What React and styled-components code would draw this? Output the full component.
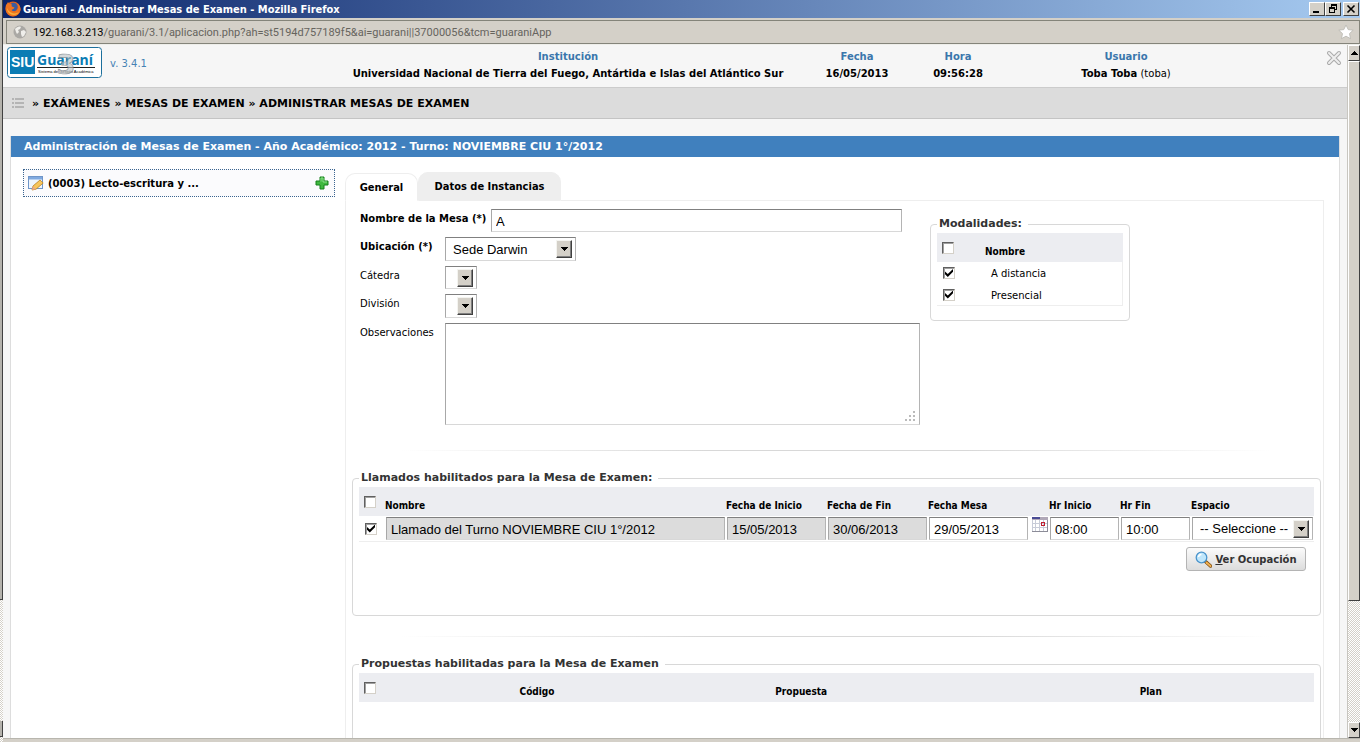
import styled, { createGlobalStyle } from "styled-components";
import { useState } from "react";

const GlobalStyle = createGlobalStyle`
  * {
    box-sizing: border-box;
  }
  body {
    margin: 0;
    font-family: "DejaVu Sans", Verdana, sans-serif;
    font-size: 10px;
    color: #000;
    background: #d4d0c8;
  }
`;

const Window = styled.div`
  height: 100vh;
  display: flex;
  overflow: hidden;
`;

const WindowColumn = styled.div`
  flex: 1;
  min-width: 0;
  display: flex;
  flex-direction: column;
`;

const LeftEdge = styled.div`
  width: 3px;
  display: flex;
  flex-direction: column;
`;

const EdgePiece = styled.div`
  flex: ${(props) => props.$grow || 0} 0 ${(props) => props.$size || 0}px;
  background: ${(props) => (props.$hatch ? "repeating-conic-gradient(#fff 0 25%, #d4d0c8 0 50%) 0 0 / 2px 2px" : "#b4b2ac")};
  border-right: ${(props) => (props.$hatch ? "0" : "1px solid #404040")};
  border-bottom: ${(props) => (props.$hatch ? "0" : "1px solid #404040")};
`;

const TitleBar = styled.div`
  height: 18px;
  display: flex;
  align-items: center;
  gap: 2px;
  padding: 0 1px 0 2px;
  background: linear-gradient(to right, #0a246a, #a6caf0);
`;

const WindowTitle = styled.h1`
  flex: 1;
  margin: 0;
  font-family: "DejaVu Sans Condensed", "DejaVu Sans", Tahoma, sans-serif;
  font-stretch: condensed;
  font-size: 11px;
  font-weight: bold;
  color: #fff;
`;

const WindowButton = styled.button`
  width: 16px;
  height: 14px;
  padding: 0;
  display: flex;
  align-items: center;
  justify-content: center;
  background: #d4d0c8;
  border: 1px solid;
  border-color: #fff #404040 #404040 #fff;
  margin-left: ${(props) => (props.$apart ? "2px" : "0")};
`;

const WindowButtons = styled.div`
  display: flex;
`;

const AddressArea = styled.div`
  height: 27px;
  padding: 2px 0 1px 3px;
  background: #d4d0c8;
  border-bottom: 1px solid #eeeeea;
`;

const AddressBar = styled.div`
  height: 24px;
  display: flex;
  align-items: center;
  gap: 6px;
  padding: 0 5px 0 6px;
  border: 1px solid #84847a;
  font-family: Roboto, Tahoma, sans-serif;
  font-size: 11px;
  color: #66645e;
`;

const Address = styled.div`
  flex: 1;
`;

const Host = styled.span`
  color: #000;
`;

const Viewport = styled.div`
  flex: 1;
  min-height: 0;
  display: flex;
`;

const Page = styled.div`
  flex: 1;
  min-width: 0;
  overflow: hidden;
  background: #f6f6f6;
`;

const StatusStrip = styled.div`
  height: 4px;
  background: #d4d0c8;
  border-top: 1px solid #b8b6ae;
`;

const ScrollBar = styled.div`
  width: 13px;
  display: flex;
  flex-direction: column;
  border-left: 1px solid #c8c6c0;
`;

const ScrollButton = styled.button`
  height: 16px;
  padding: 0;
  display: flex;
  align-items: center;
  justify-content: center;
  background: #d4d0c8;
  border: 1px solid;
  border-color: #fff #404040 #404040 #fff;
`;

const ScrollThumb = styled.div`
  flex: 540;
  background: #d4d0c8;
  border: 1px solid;
  border-color: #fff #404040 #404040 #fff;
`;

const ScrollTrack = styled.div`
  flex: 122;
  background: repeating-conic-gradient(#fff 0 25%, #d4d0c8 0 50%) 0 0 / 2px 2px;
`;

const Header = styled.header`
  height: 43px;
  display: grid;
  grid-template-columns: 345fr 440fr 138fr 64fr 272fr 85fr;
  border-bottom: 1px solid #ccc;
`;

const Brand = styled.div`
  display: flex;
  align-items: flex-start;
  gap: 8px;
  padding: 2px 0 0 4px;
`;

const Version = styled.span`
  line-height: 34px;
  color: #4682b4;
`;

const HeaderCell = styled.div`
  padding-top: 3px;
  text-align: center;
  line-height: 17px;
  white-space: nowrap;
`;

const HeaderLabel = styled.div`
  font-weight: bold;
  color: #3a76ac;
`;

const CloseCell = styled.div`
  display: flex;
  justify-content: flex-end;
  align-items: flex-start;
  padding: 5px 5px 0 0;
`;

const IconButton = styled.button`
  padding: 0;
  margin: 0 0 0 ${(props) => (props.$end ? "auto" : "0")};
  border: 0;
  background: none;
  display: flex;
`;

const Breadcrumb = styled.nav`
  height: 31px;
  display: flex;
  align-items: center;
  gap: 8px;
  padding-left: 9px;
  background: #dcdcdc;
  border-bottom: 1px solid #c4c4c4;
  font-size: 11px;
  font-weight: bold;
`;

const Panel = styled.section`
  margin: 17px 7px 0;
  min-height: 100%;
  background: #fff;
  border: solid #ddd;
  border-width: 0 1px;
`;

const PanelTitle = styled.h2`
  height: 21px;
  margin: 0;
  padding-left: 13px;
  line-height: 21px;
  font-size: 11px;
  color: #fff;
  background: #4080be;
`;

const PanelBody = styled.div`
  display: flex;
  align-items: stretch;
  padding: 12px 15px 0 12px;
`;

const Sidebar = styled.aside`
  flex: 0 0 312px;
  margin-right: 10px;
`;

const TreeItem = styled.div`
  height: 28px;
  display: flex;
  align-items: center;
  gap: 4px;
  padding: 0 5px 0 4px;
  border: 1px dotted #3b6590;
  background: #fbfbfd;
  font-weight: bold;
`;

const TreeLabel = styled.span`
  flex: 1;
`;

const Main = styled.main`
  flex: 1;
  min-width: 0;
`;

const Tabs = styled.div`
  height: 32px;
  display: flex;
  align-items: flex-end;

  &::after {
    content: "";
    flex: 1;
    border-bottom: 1px solid #eee;
  }
`;

const Tab = styled.button`
  height: ${(props) => (props.$active ? "28px" : "29px")};
  width: ${(props) => (props.$active ? "73px" : "143px")};
  padding: 0;
  border: 1px solid #eee;
  border-bottom-color: ${(props) => (props.$active ? "#fff" : "#eee")};
  border-radius: 10px 10px 0 0;
  background: ${(props) => (props.$active ? "#fff" : "#eee")};
  font-family: "DejaVu Sans Condensed", "DejaVu Sans", Tahoma, sans-serif;
  font-stretch: condensed;
  font-size: 11px;
  font-weight: bold;
  color: #000;
`;

const TabBody = styled.div`
  padding: 8px 2px 20px 6px;
  border: solid #eee;
  border-width: 0 1px;
`;

const FormArea = styled.div`
  display: flex;
  align-items: flex-start;
  gap: 10px;
  padding-left: 8px;
`;

const Fields = styled.div`
  flex: 0 0 560px;
  display: flex;
  flex-direction: column;
  gap: 5px;
`;

const Field = styled.div`
  display: flex;
  align-items: flex-start;
`;

const Label = styled.label`
  flex: 0 0 ${(props) => (props.$wide ? 131 : 85)}px;
  line-height: 19px;
  font-weight: ${(props) => (props.$required ? "bold" : "normal")};
  white-space: nowrap;
`;

const TextInput = styled.input`
  width: ${(props) => (props.$width ? props.$width + "px" : "100%")};
  height: 23px;
  display: block;
  padding: 1px 4px 0;
  border: 1px solid;
  border-color: #808080 #b4b4b4 #d8d8d8 #a8a8a8;
  border-radius: 0;
  outline: 0;
  background: ${(props) => (props.readOnly ? "#dcdcdc" : "#fff")};
  font-family: "Liberation Sans", Arial, sans-serif;
  font-size: 13px;
  color: #000;
`;

const SelectBox = styled.div`
  width: ${(props) => (props.$width ? props.$width + "px" : "100%")};
  height: ${(props) => (props.$tall ? "24px" : "23px")};
  display: grid;
  align-items: center;

  > * {
    grid-area: 1 / 1;
  }
`;

const NativeSelect = styled.select`
  appearance: none;
  width: 100%;
  height: 100%;
  padding: 0 20px 0 7px;
  border: 1px solid;
  border-color: #808080 #b4b4b4 #d8d8d8 #a8a8a8;
  border-radius: 0;
  background: #fff;
  font-family: "Liberation Sans", Arial, sans-serif;
  font-size: 13px;
  color: #000;
`;

const SelectArrow = styled.span`
  justify-self: end;
  width: 16px;
  height: 18px;
  margin-right: 4px;
  display: flex;
  align-items: center;
  justify-content: center;
  pointer-events: none;
  background: #d4d0c8;
  border: 1px solid;
  border-color: #f4f4f0 #404040 #404040 #f4f4f0;
  box-shadow: inset -1px -1px 0 #808080;
`;

const NotesBox = styled.div`
  width: 475px;
  display: grid;

  > * {
    grid-area: 1 / 1;
  }
`;

const Notes = styled.textarea`
  height: 102px;
  resize: none;
  border: 1px solid;
  border-color: #808080 #b4b4b4 #d8d8d8 #a8a8a8;
  border-radius: 0;
  font-family: "Liberation Sans", Arial, sans-serif;
  font-size: 13px;
`;

const Grip = styled.svg`
  place-self: end;
  margin: 0 4px 3px 0;
`;

const Fieldset = styled.fieldset`
  min-width: 0;
  width: ${(props) => (props.$width ? props.$width + "px" : "auto")};
  margin: ${(props) => (props.$width ? "8px 0 0" : "0")};
  padding: 2px 6px ${(props) => props.$bottom}px;
  border: 1px solid #d8d8d8;
  border-radius: 4px;
`;

const Legend = styled.legend`
  height: 14px;
  padding: 0 6px 0 2px;
  line-height: 14px;
  font-size: 11px;
  font-weight: bold;
  color: #333;
`;

const Divider = styled.hr`
  height: 1px;
  margin: ${(props) => (props.$first ? "25px" : "20px")} 50px 20px;
  border: 0;
  background: linear-gradient(to right, #fff, #d8d8d8 35%, #d8d8d8 65%, #fff);
`;

const Table = styled.table`
  width: 100%;
  table-layout: fixed;
  border-collapse: separate;
  border-spacing: 0;
`;

const Th = styled.th`
  height: 29px;
  padding: ${(props) => (props.$check ? "0 0 0 5px" : "8px 0 0")};
  text-align: ${(props) => props.$align || "left"};
  background: #ecedf1;
  font-family: "DejaVu Sans Condensed", "DejaVu Sans", Tahoma, sans-serif;
  font-stretch: condensed;
  font-size: 10px;
  white-space: nowrap;
`;

const Td = styled.td`
  height: 26px;
  padding: ${(props) => (props.$check ? "0 0 0 6px" : "1px")};
  vertical-align: ${(props) => (props.$top ? "top" : "middle")};
  border-bottom: 1px solid #eee;
`;

const ListTd = styled.td`
  height: 22px;
  padding: ${(props) => (props.$check ? "0 0 0 6px" : "1px 0 0 6px")};
  border-bottom: ${(props) => (props.$last ? "1px solid #eee" : "0")};

  &:last-child {
    border-right: 1px solid #eee;
  }
`;

const Check = styled.input`
  appearance: none;
  width: 12px;
  height: 12px;
  margin: 0;
  display: grid;
  place-items: center;
  background: #fff;
  border: 1px solid;
  border-color: #606060 #d4d0c8 #d4d0c8 #606060;
  box-shadow: inset 1px 1px 0 #a0a0a0;

  &:checked::after {
    content: "";
    width: 8px;
    height: 8px;
    background: #000;
    clip-path: polygon(0 30%, 35% 62%, 100% 0, 100% 35%, 35% 100%, 0 65%);
  }
`;

const ActionRow = styled.div`
  display: flex;
  justify-content: flex-end;
  padding: 5px 8px 0 0;
`;

const ActionButton = styled.button`
  width: 120px;
  height: 24px;
  padding: 0;
  display: flex;
  align-items: center;
  justify-content: center;
  gap: 3px;
  border: 1px solid #b4b4b4;
  border-radius: 3px;
  background: linear-gradient(#fbfbfb, #dcdcdc);
  font-family: "DejaVu Sans", Verdana, sans-serif;
  font-size: 10px;
  font-weight: bold;
  color: #333;
  white-space: nowrap;
`;

const FirefoxIcon = () => (
  <svg width="16" height="16" viewBox="0 0 16 16">
    <circle cx="8" cy="8" r="7.5" fill="#e0601a" />
    <circle cx="8.500" cy="6" r="4.200" fill="#3a5ca0" />
    <path d="M1 4c1-1 1.500-2 2-3 1 1.500 2 2 4 2.500C6 5 7 6 9.500 6.500 9 8 7.500 8 6.500 9c1.500 2 4.500 2 6-.5 1-2 .8-4-.5-6C15 4 16 7 15.300 10 14 14 10 16 6 15 1.500 13.500-.5 9 1 4z" fill="#ee7420" />
    <path d="M2 7c0 4 3 7 7 7 2 0 4-1 5-3-2 1.500-5 2-8 .5C4 10.500 3 9 2 7z" fill="#f8b03a" />
  </svg>
);

const GlobeIcon = () => (
  <svg width="14" height="14" viewBox="0 0 14 14">
    <circle cx="7" cy="7" r="6.500" fill="#aaa8a4" />
    <path d="M2 4c2-2 4-3 6-2L7 4 5 5l1 2-2 2-1-2zM8 6l3-1 2 2-2 4-2 1-1-3z" fill="#efeeea" />
  </svg>
);

const Triangle = ({ up, size = 8 }) => (
  <svg width={size} height={size / 2} viewBox="0 0 8 4" shapeRendering="crispEdges">
    <path d={up ? "M0 4L4 0L8 4z" : "M0 0L4 4L8 0z"} fill="#000" />
  </svg>
);

const Logo = () => (
  <svg width="95" height="31" viewBox="0 0 95 31" overflow="visible" role="img" aria-label="SIU Guaraní 3">
    <rect x=".5" y=".5" width="94" height="30" rx="3" fill="#fff" stroke="#1c6f9c" />
    <rect x="3" y="3" width="25" height="24" fill="#0a7cb4" />
    <text x="4" y="20" fontFamily="Liberation Sans" fontSize="14" fontWeight="bold" fill="#fff">SIU</text>
    <text x="30" y="18" fontFamily="Open Sans" fontSize="14" fontWeight="bold" fill="#0a7cb4">Guaraní</text>
    <path d="M30 20.500h58" stroke="#222" />
    <text x="31" y="26" fontFamily="Liberation Sans" fontSize="4" fill="#000">Sistema de Gestión Académica</text>
    <text x="59" y="27" fontFamily="DejaVu Sans" fontSize="27" fontWeight="bold" fill="#b9bfc3" fillOpacity=".6" stroke="#7c8488" strokeOpacity=".8" strokeWidth=".7" textAnchor="middle">3</text>
  </svg>
);

const EditIcon = () => (
  <svg width="16" height="16" viewBox="0 0 16 16">
    <rect x=".5" y="1.500" width="14" height="12" fill="#eef5fd" stroke="#6f95c8" />
    <path d="M1 2h13v2.500H1z" fill="#7fa9e0" />
    <path d="M4 15l1-4 7-6 3.200 3L8 14.200z" fill="#f7c65c" stroke="#b98022" strokeWidth=".8" />
    <path d="M4 15l1-4 3 3.200z" fill="#eaa98c" />
  </svg>
);

const PlusIcon = () => (
  <svg width="14" height="14" viewBox="0 0 14 14">
    <path d="M5 1h4v4h4v4H9v4H5V9H1V5h4z" fill="#3fb83f" stroke="#16801c" />
    <path d="M6 5.500V2h2v4h4" fill="none" stroke="#8be08b" />
  </svg>
);

const CalendarIcon = () => (
  <svg width="16" height="15" viewBox="0 0 16 15" shapeRendering="crispEdges">
    <rect width="16" height="15" fill="#fff" />
    <path d="M0 6.500h16M0 10.500h16M3.500 3v12M7.500 3v12M11.500 3v12M.5 0v15" stroke="#c8ccd8" />
    <path d="M15.500 0v15M0 14.500h16" stroke="#8c8c98" />
    <path d="M0 0h16v3H0z" fill="#b0a8b8" />
    <path d="M0 0h8v2H0z" fill="#4a4c94" />
    <path d="M9 5h4v4H9zM10 6v2h2V6z" fillRule="evenodd" fill="#c02030" />
  </svg>
);

const SearchIcon = () => (
  <svg width="17" height="17" viewBox="0 0 17 17">
    <path d="M10.500 10.500l5 4.500" stroke="#7a4a10" strokeWidth="3.500" strokeLinecap="round" />
    <path d="M11.500 11.500l4 3.500" stroke="#f0b050" strokeWidth="2" strokeLinecap="round" />
    <circle cx="6.500" cy="6.500" r="5.300" fill="#bfe6fb" stroke="#4a94cc" strokeWidth="1.300" />
    <path d="M3.500 6a3 3 0 0 1 3-2.500" stroke="#fff" strokeWidth="1.500" fill="none" />
  </svg>
);

const Select = ({ id, label, width, tall, option }) => (
  <SelectBox $width={width} $tall={tall}>
    <NativeSelect id={id} aria-label={label}>
      <option>{option}</option>
    </NativeSelect>
    <SelectArrow>
      <Triangle />
    </SelectArrow>
  </SelectBox>
);

const headerData = [
  { label: "Institución", value: "Universidad Nacional de Tierra del Fuego, Antártida e Islas del Atlántico Sur" },
  { label: "Fecha", value: "16/05/2013" },
  { label: "Hora", value: "09:56:28" },
];

const App = () => {
  const [nombre, setNombre] = useState("A");
  const [fechaMesa, setFechaMesa] = useState("29/05/2013");
  const [inicio, setInicio] = useState("08:00");
  const [fin, setFin] = useState("10:00");

  return (
    <Window>
      <GlobalStyle />
      <LeftEdge>
        <EdgePiece $grow={600} />
        <EdgePiece $grow={121} $hatch />
        <EdgePiece $size={16} />
        <EdgePiece $size={5} $hatch />
      </LeftEdge>
      <WindowColumn>
        <TitleBar>
          <FirefoxIcon />
          <WindowTitle>Guarani - Administrar Mesas de Examen - Mozilla Firefox</WindowTitle>
          <WindowButtons>
            <WindowButton aria-label="Minimizar">
              <svg width="10" height="10" shapeRendering="crispEdges"><path d="M1 7h6v2H1z" /></svg>
            </WindowButton>
            <WindowButton aria-label="Restaurar">
              <svg width="10" height="10" shapeRendering="crispEdges">
                <path d="M3 0h6v6H7V5h1V2H4v1H3zM1 3h6v6H1zM2 5v3h4V5z" fillRule="evenodd" />
              </svg>
            </WindowButton>
            <WindowButton aria-label="Cerrar" $apart>
              <svg width="10" height="10"><path d="M1.500 1.500l7 7m0-7l-7 7" stroke="#000" strokeWidth="1.600" /></svg>
            </WindowButton>
          </WindowButtons>
        </TitleBar>
        <AddressArea>
          <AddressBar>
            <GlobeIcon />
            <Address>
              <Host>192.168.3.213</Host>/guarani/3.1/aplicacion.php?ah=st5194d757189f5&amp;ai=guarani||37000056&amp;tcm=guaraniApp
            </Address>
            <svg width="16" height="16" viewBox="0 0 16 16">
              <path d="M8 1l2.200 4.600 5 .6-3.700 3.400 1 5L8 12.200l-4.500 2.400 1-5L.8 6.200l5-.6z" fill="#fff" stroke="#b8b6b0" strokeWidth=".8" />
            </svg>
          </AddressBar>
        </AddressArea>
        <Viewport>
          <Page>
            <Header>
              <Brand>
                <Logo />
                <Version>v. 3.4.1</Version>
              </Brand>
              {headerData.map((item) => (
                <HeaderCell key={item.label}>
                  <HeaderLabel>{item.label}</HeaderLabel>
                  <b>{item.value}</b>
                </HeaderCell>
              ))}
              <HeaderCell>
                <HeaderLabel>Usuario</HeaderLabel>
                <b>Toba Toba</b> (toba)
              </HeaderCell>
              <CloseCell>
                <IconButton aria-label="Salir">
                  <svg width="16" height="16" viewBox="0 0 16 16">
                    <path d="M3 3l10 10M13 3L3 13" stroke="#aaa" strokeWidth="4" strokeLinecap="round" />
                    <path d="M3 3l10 10M13 3L3 13" stroke="#eee" strokeWidth="2" strokeLinecap="round" />
                  </svg>
                </IconButton>
              </CloseCell>
            </Header>
            <Breadcrumb>
              <svg width="12" height="10" shapeRendering="crispEdges">
                <path d="M0 1h2M3 1h9M0 5h2M3 5h9M0 9h2M3 9h9" stroke="#b4b4b4" strokeWidth="2" />
              </svg>
              <span>» EXÁMENES » MESAS DE EXAMEN » ADMINISTRAR MESAS DE EXAMEN</span>
            </Breadcrumb>
            <Panel>
              <PanelTitle>Administración de Mesas de Examen - Año Académico: 2012 - Turno: NOVIEMBRE CIU 1°/2012</PanelTitle>
              <PanelBody>
                <Sidebar>
                  <TreeItem>
                    <EditIcon />
                    <TreeLabel>(0003) Lecto-escritura y ...</TreeLabel>
                    <IconButton aria-label="Agregar">
                      <PlusIcon />
                    </IconButton>
                  </TreeItem>
                </Sidebar>
                <Main>
                  <Tabs>
                    <Tab $active>General</Tab>
                    <Tab>Datos de Instancias</Tab>
                  </Tabs>
                  <TabBody>
                    <FormArea>
                      <Fields>
                        <Field>
                          <Label htmlFor="nombre" $required $wide>Nombre de la Mesa (*)</Label>
                          <TextInput id="nombre" $width={411} value={nombre} onChange={(e) => setNombre(e.target.value)} />
                        </Field>
                        <Field>
                          <Label htmlFor="ubicacion" $required>Ubicación (*)</Label>
                          <Select id="ubicacion" width={131} tall option="Sede Darwin" />
                        </Field>
                        <Field>
                          <Label htmlFor="catedra">Cátedra</Label>
                          <Select id="catedra" width={32} option="" />
                        </Field>
                        <Field>
                          <Label htmlFor="division">División</Label>
                          <Select id="division" width={32} tall option="" />
                        </Field>
                        <Field>
                          <Label htmlFor="observaciones">Observaciones</Label>
                          <NotesBox>
                            <Notes id="observaciones" />
                            <Grip width="11" height="11" fill="#bbb">
                              <path d="M8 0h2v2H8zM4 4h2v2H4zM8 4h2v2H8zM0 8h2v2H0zM4 8h2v2H4zM8 8h2v2H8z" />
                            </Grip>
                          </NotesBox>
                        </Field>
                      </Fields>
                      <Fieldset $width={200} $bottom={14}>
                        <Legend>Modalidades:</Legend>
                        <Table>
                          <colgroup>
                            <col style={{ width: "48px" }} />
                            <col />
                          </colgroup>
                          <thead>
                            <tr>
                              <Th $check><Check type="checkbox" aria-label="Todas las modalidades" /></Th>
                              <Th>Nombre</Th>
                            </tr>
                          </thead>
                          <tbody>
                            <tr>
                              <ListTd $check><Check type="checkbox" id="distancia" defaultChecked /></ListTd>
                              <ListTd><Label htmlFor="distancia">A distancia</Label></ListTd>
                            </tr>
                            <tr>
                              <ListTd $last $check><Check type="checkbox" id="presencial" defaultChecked /></ListTd>
                              <ListTd $last><Label htmlFor="presencial">Presencial</Label></ListTd>
                            </tr>
                          </tbody>
                        </Table>
                      </Fieldset>
                    </FormArea>
                    <Divider $first />
                    <Fieldset $bottom={44}>
                      <Legend>Llamados habilitados para la Mesa de Examen:</Legend>
                      <Table>
                        <colgroup>
                          <col style={{ width: "26px" }} />
                          <col />
                          <col style={{ width: "101px" }} />
                          <col style={{ width: "101px" }} />
                          <col style={{ width: "101px" }} />
                          <col style={{ width: "20px" }} />
                          <col style={{ width: "71px" }} />
                          <col style={{ width: "71px" }} />
                          <col style={{ width: "123px" }} />
                        </colgroup>
                        <thead>
                          <tr>
                            <Th $check><Check type="checkbox" aria-label="Todos los llamados" /></Th>
                            <Th>Nombre</Th>
                            <Th>Fecha de Inicio</Th>
                            <Th>Fecha de Fin</Th>
                            <Th colSpan={2}>Fecha Mesa</Th>
                            <Th>Hr Inicio</Th>
                            <Th>Hr Fin</Th>
                            <Th>Espacio</Th>
                          </tr>
                        </thead>
                        <tbody>
                          <tr>
                            <Td $check><Check type="checkbox" aria-label="Llamado" defaultChecked /></Td>
                            <Td><TextInput aria-label="Nombre" readOnly value="Llamado del Turno NOVIEMBRE CIU 1°/2012" /></Td>
                            <Td><TextInput aria-label="Fecha de Inicio" readOnly value="15/05/2013" /></Td>
                            <Td><TextInput aria-label="Fecha de Fin" readOnly value="30/06/2013" /></Td>
                            <Td><TextInput aria-label="Fecha Mesa" value={fechaMesa} onChange={(e) => setFechaMesa(e.target.value)} /></Td>
                            <Td $top>
                              <IconButton $end aria-label="Elegir fecha"><CalendarIcon /></IconButton>
                            </Td>
                            <Td><TextInput aria-label="Hr Inicio" value={inicio} onChange={(e) => setInicio(e.target.value)} /></Td>
                            <Td><TextInput aria-label="Hr Fin" value={fin} onChange={(e) => setFin(e.target.value)} /></Td>
                            <Td><Select label="Espacio" option="-- Seleccione --" /></Td>
                          </tr>
                        </tbody>
                      </Table>
                      <ActionRow>
                        <ActionButton>
                          <SearchIcon />
                          <span><u>V</u>er Ocupación</span>
                        </ActionButton>
                      </ActionRow>
                    </Fieldset>
                    <Divider />
                    <Fieldset $bottom={60}>
                      <Legend>Propuestas habilitadas para la Mesa de Examen</Legend>
                      <Table>
                        <colgroup>
                          <col style={{ width: "100px" }} />
                          <col style={{ width: "156px" }} />
                          <col style={{ width: "39%" }} />
                          <col />
                        </colgroup>
                        <thead>
                          <tr>
                            <Th $check><Check type="checkbox" aria-label="Todas las propuestas" /></Th>
                            <Th $align="center">Código</Th>
                            <Th $align="center">Propuesta</Th>
                            <Th $align="center">Plan</Th>
                          </tr>
                        </thead>
                      </Table>
                    </Fieldset>
                  </TabBody>
                </Main>
              </PanelBody>
            </Panel>
          </Page>
          <ScrollBar>
            <ScrollButton aria-label="Subir"><Triangle up /></ScrollButton>
            <ScrollThumb />
            <ScrollTrack />
            <ScrollButton aria-label="Bajar"><Triangle /></ScrollButton>
          </ScrollBar>
        </Viewport>
        <StatusStrip />
      </WindowColumn>
    </Window>
  );
};

export default App;
